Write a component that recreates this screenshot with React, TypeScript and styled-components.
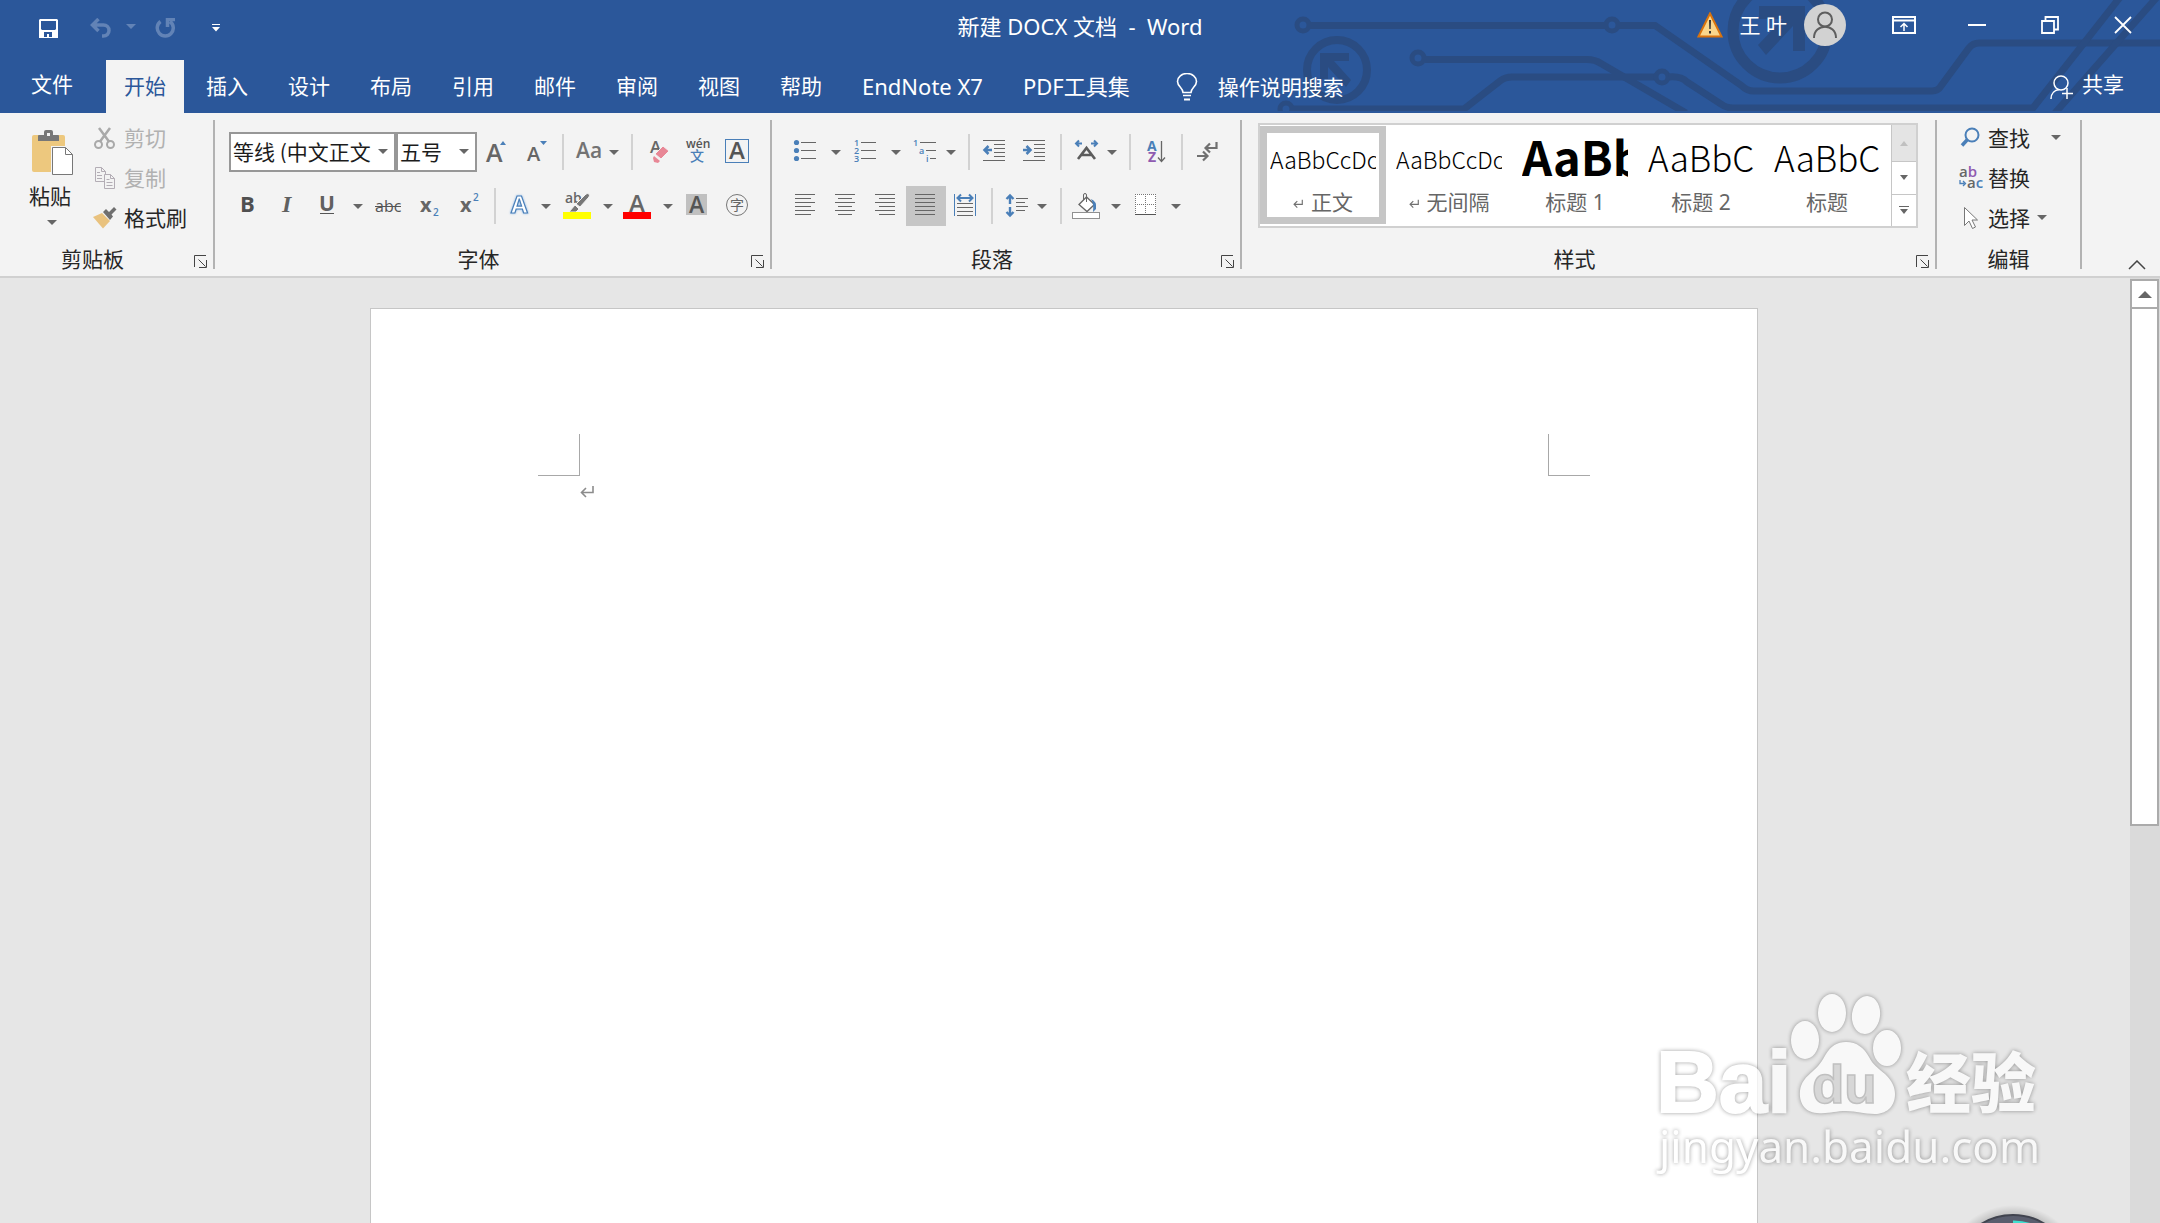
import React from "react";
import styled, { createGlobalStyle } from "styled-components";

const UI = `"Noto Sans", "Noto Sans CJK SC", sans-serif`;
const DENG = `"Noto Sans CJK SC", "Noto Sans", sans-serif`;
const GREY = "#666666";
const BLUE = "#4a7fb8";
const PURPLE = "#8f5bb0";

const Global = createGlobalStyle`
  *, *::before, *::after { box-sizing: border-box; }
  html, body { margin: 0; height: 100%; overflow: hidden; }
  #root { height: 100%; }
  body { font: 21px/24px ${UI}; color: #262626; background: #e6e6e6; }
  button, input, select { font: inherit; color: inherit; border: 0; background: none; padding: 0; margin: 0; outline: none; }
  svg { display: block; flex: none; }
  svg text { font-family: "Open Sans", "Noto Sans CJK SC", sans-serif; }
`;

const Window = styled.div`
  display: flex;
  flex-direction: column;
  height: 100vh;
  position: relative;
  overflow: hidden;
`;

/* ---------- header ---------- */
const Header = styled.header`
  position: relative;
  background: #2b579a;
  color: #ffffff;
  flex: none;
`;
const Circuit = styled.svg`
  position: absolute;
  top: 0;
  right: 0;
`;
const TitleRow = styled.div`
  position: relative;
  display: grid;
  grid-template-columns: 1fr auto 1fr;
  height: 54px;
`;
const QuickAccess = styled.div`
  display: flex;
  align-items: center;
  gap: 8px;
  padding: 2px 0 0 24px;
`;
const QuickButton = styled.button<{ $w: number }>`
  width: ${(p) => p.$w}px;
  height: 40px;
  display: flex;
  align-items: center;
  justify-content: center;
`;
const UndoButton = styled(QuickButton)`
  justify-content: flex-end;
`;
const Title = styled.h1`
  margin: 0;
  font-size: 22px;
  font-weight: 400;
  line-height: 52px;
  white-space: pre;
`;
const TitleRight = styled.div`
  display: flex;
  align-items: center;
  justify-content: flex-end;
  height: 50px;
  padding-right: 1px;
`;
const Account = styled.button`
  display: flex;
  align-items: center;
  gap: 17px;
  margin-right: 21px;
`;
const WinButton = styled.button`
  width: 73px;
  height: 50px;
  display: flex;
  align-items: center;
  justify-content: center;
`;
const TabRow = styled.nav`
  position: relative;
  display: flex;
  align-items: flex-end;
  height: 59px;
`;
const Tab = styled.button<{ $active?: boolean; $latin?: boolean }>`
  height: 53px;
  white-space: nowrap;
  font-size: ${(p) => (p.$latin ? 22 : 21)}px;
  padding: 0 ${(p) => (p.$active ? 18 : 20)}px 2px;
  margin: 0 ${(p) => (p.$active ? 2 : 0)}px;
  background: ${(p) => (p.$active ? "#f3f3f3" : "transparent")};
  color: ${(p) => (p.$active ? "#2b579a" : "#ffffff")};
`;
const FileTab = styled(Tab)`
  width: 104px;
  padding-bottom: 6px;
`;
const TellMe = styled.label`
  display: flex;
  align-items: center;
  gap: 20px;
  height: 53px;
  margin-left: 26px;
`;
const TellInput = styled.input`
  width: 180px;
  height: 30px;
  &::placeholder { color: #ffffff; opacity: 1; }
`;
const Share = styled.button`
  display: flex;
  align-items: center;
  gap: 8px;
  height: 53px;
  margin-left: auto;
  padding: 0 36px 6px 0;
  svg { margin-top: 6px; }
`;

/* ---------- ribbon ---------- */
const Ribbon = styled.section`
  display: flex;
  flex: none;
  height: 165px;
  padding: 6px 0;
  background: #f3f3f3;
  border-bottom: 2px solid #d0d0d0;
`;
const Group = styled.div<{ $w?: number }>`
  display: flex;
  flex-direction: column;
  flex: ${(p) => (p.$w ? `none` : `1`)};
  width: ${(p) => (p.$w ? `${p.$w}px` : `auto`)};
  min-width: 0;
  border-right: 2px solid #b2b2b2;
  margin: 1px 0;
`;
const GroupBody = styled.div`
  flex: 1;
  display: flex;
  min-width: 0;
`;
const GroupFoot = styled.div`
  display: flex;
  align-items: center;
  height: 24px;
  padding-top: 4px;
`;
const GroupLabel = styled.div`
  flex: 1;
  text-align: center;
`;
const Launcher = styled.button`
  width: 28px;
  height: 20px;
  display: flex;
  align-items: center;
  justify-content: center;
  padding: 4px 0 0 2px;
`;
const ToolRows = styled.div`
  display: flex;
  flex-direction: column;
  gap: 14px;
  padding: 12px 0 0 14px;
`;
const ToolRow = styled.div`
  display: flex;
  height: 40px;
`;
const Tool = styled.button<{ $on?: boolean }>`
  height: 40px;
  background: ${(p) => (p.$on ? "#c6c6c6" : "transparent")};
`;
const Divider = styled.span`
  width: 2px;
  height: 36px;
  margin: 2px 5px;
  background: #d2d2d2;
`;
const Combo = styled.label<{ $w: number }>`
  position: relative;
  display: flex;
  align-items: center;
  width: ${(p) => p.$w}px;
  height: 40px;
  border: 2px solid #979797;
  background: #ffffff;
  svg { position: absolute; right: 6px; top: 15px; }
`;
const Select = styled.select`
  appearance: none;
  width: 100%;
  height: 36px;
  padding: 0 0 2px 2px;
  font-family: ${DENG};
  color: #1c1c1c;
`;
const PasteButton = styled.button`
  display: flex;
  flex-direction: column;
  align-items: center;
  width: 84px;
  padding: 10px 0 0 22px;
`;
const PasteLabel = styled.span`
  display: flex;
  flex-direction: column;
  align-items: center;
  gap: 12px;
  margin: 8px 6px 0 0;
  svg { margin-left: 4px; }
`;
const Stack = styled.div<{ $pad?: number }>`
  display: flex;
  flex-direction: column;
  padding-left: ${(p) => p.$pad ?? 0}px;
`;
const CommandButton = styled.button<{ $off?: boolean; $gap?: number }>`
  display: flex;
  align-items: center;
  height: 40px;
  padding-bottom: 4px;
  white-space: nowrap;
  color: ${(p) => (p.$off ? "#b1b1b1" : "#262626")};
  svg:first-child { margin-right: 5px; }
  svg:last-child { margin-left: ${(p) => p.$gap ?? 0}px; }
`;
const Gallery = styled.div`
  display: flex;
  flex: 1;
  height: 105px;
  margin: 3px 17px 0 16px;
  border: 2px solid #d0d0d0;
  background: #ffffff;
  min-width: 0;
`;
const GalleryItems = styled.div`
  display: flex;
  flex: 1;
  min-width: 0;
  overflow: hidden;
  padding-top: 1px;
`;
const StyleCard = styled.button<{ $on?: boolean }>`
  display: flex;
  flex-direction: column;
  flex: none;
  width: 126px;
  height: 98px;
  padding: 0 3px;
  border: 7px solid ${(p) => (p.$on ? "#c6c6c6" : "#ffffff")};
  color: #666666;
`;
const Preview = styled.span<{ $size: number; $line: number; $weight: number }>`
  display: block;
  width: 100%;
  height: 55px;
  overflow: hidden;
  text-align: left;
  white-space: nowrap;
  font: ${(p) => p.$weight} ${(p) => p.$size}px/${(p) => p.$line}px ${DENG};
  color: #000000;
`;
const Caption = styled.span`
  display: flex;
  align-items: center;
  justify-content: center;
  gap: 8px;
  width: 100%;
  height: 28px;
  white-space: nowrap;
  svg { margin-top: 4px; }
`;
const GalleryScroll = styled.div`
  display: flex;
  flex-direction: column;
  width: 25px;
  border-left: 1px solid #c6c6c6;
`;
const ScrollStep = styled.button<{ $off?: boolean }>`
  flex: ${(p) => (p.$off ? "0 0 36px" : "1")};
  display: flex;
  align-items: center;
  justify-content: center;
  background: ${(p) => (p.$off ? "#e4e4e4" : "#ffffff")};
  & + & { border-top: 1px solid #c6c6c6; }
`;
const RibbonEnd = styled.div`
  display: flex;
  align-items: flex-end;
  justify-content: flex-end;
  width: 78px;
  padding-right: 14px;
`;

/* ---------- document ---------- */
const Workspace = styled.main`
  flex: 1;
  display: flex;
  min-height: 0;
  background: #e6e6e6;
`;
const Canvas = styled.div`
  flex: 1;
  display: flex;
  justify-content: center;
  padding: 30px 2px 0 0;
  overflow: hidden;
`;
const Page = styled.article`
  width: 1388px;
  height: 1964px;
  flex: none;
  padding: 125px 167px;
  background: #ffffff;
  border: 1px solid #c6c6c6;
`;
const MarginMarks = styled.div`
  display: flex;
  justify-content: space-between;
`;
const Corner = styled.span<{ $side: "left" | "right" }>`
  width: 42px;
  height: 42px;
  border-bottom: 1px solid #a8a8a8;
  border-${(p) => (p.$side === "left" ? "right" : "left")}: 1px solid #a8a8a8;
`;
const Paragraph = styled.p`
  margin: 9px 0 0 42px;
`;
const Scrollbar = styled.div`
  display: flex;
  flex-direction: column;
  width: 30px;
  padding: 1px 1px 0 0;
  background: #dadada;
`;
const ScrollUp = styled.button`
  display: flex;
  align-items: center;
  justify-content: center;
  height: 30px;
  flex: none;
  border: 2px solid #ababab;
  background: #ffffff;
`;
const Thumb = styled.div`
  flex: none;
  height: 55%;
  margin-top: -2px;
  border: 2px solid #ababab;
  background: #ffffff;
`;
const Watermark = styled.svg`
  position: absolute;
  right: 104px;
  bottom: 33px;
  opacity: 0.75;
  filter: drop-shadow(0 0 2px rgba(0, 0, 0, 0.5));
`;
const FloatBall = styled.svg`
  position: absolute;
  right: 72px;
  bottom: 0;
`;

/* ---------- drawings ---------- */
const Drop = ({ fill = GREY }: { fill?: string }) => (
  <svg width="10" height="6" viewBox="0 0 10 6"><path d="M0 0h10L5 5z" fill={fill} /></svg>
);
const Glyph = ({ w = 40, drop, children }: { w?: number; drop?: number; children: React.ReactNode }) => (
  <svg width={w} height="40" viewBox={`0 0 ${w} 40`} fill="none">
    {children}
    {drop !== undefined && <path d={`M${drop} 18h10l-5 5z`} fill={GREY} />}
  </svg>
);
const Lines = ({ rows }: { rows: number[][] }) => (
  <g fill={GREY}>{rows.map(([y, a, b]) => <rect key={y} x={a} y={y} width={b - a} height="1" />)}</g>
);
const ReturnMark = ({ size = 14, color = "#8c8c8c" }) => (
  <svg width={size} height={size} viewBox="0 0 14 14" fill="none" stroke={color} strokeWidth="1.6">
    <path d="M13 1v6.500H1.500M6 3L1.500 7.500 6 12" />
  </svg>
);

const T = ({ label, children, on }: { label: string; children: React.ReactNode; on?: boolean }) => (
  <Tool type="button" aria-label={label} aria-pressed={on} $on={on}>{children}</Tool>
);

const CircuitArt = () => (
  <Circuit width="900" height="111" viewBox="1260 0 900 111" fill="none" stroke="#2a4c82" strokeWidth="7" aria-hidden="true">
    <circle cx="1303" cy="25" r="6" strokeWidth="5" />
    <circle cx="1612" cy="25" r="6" strokeWidth="5" />
    <path d="M1310 25.500h295M1619 25.500h36L1742 86q5 5 12 5h178q6 0 9-5l28-38q4-5 10-5h182" />
    <circle cx="1418" cy="58" r="6" strokeWidth="5" />
    <path d="M1425 59.500h162q8 0 14 4L1686 113" />
    <circle cx="1286" cy="109" r="6" strokeWidth="5" />
    <path d="M1293 109h171l36-28q5-4 12-4h143" />
    <circle cx="1662" cy="77" r="6" strokeWidth="5" />
    <path d="M1669 77q12-1 18 5l34 22q5 4 12 4h300L2121-4M2055 113L2158-4" />
    <circle cx="1337" cy="70" r="30" strokeWidth="8" />
    <circle cx="1780" cy="31" r="47" strokeWidth="11" />
    <g fill="#2a4c82" stroke="none">
      <path d="M1320 53h29v8h-15l17 19-5 7-18-20v12h-8z" />
      <path d="M1759 6h46v45h-12V26l-27 29-8-10 25-26h-24z" />
    </g>
  </Circuit>
);

const tabs = [
  { name: "插入" }, { name: "设计" }, { name: "布局" }, { name: "引用" }, { name: "邮件" }, { name: "审阅" },
  { name: "视图" }, { name: "帮助" }, { name: "EndNote X7", latin: true }, { name: "PDF工具集", latin: true },
];
const cards = [
  { name: "正文", text: "AaBbCcDc", size: 23, line: 52, weight: 300, mark: true },
  { name: "无间隔", text: "AaBbCcDc", size: 23, line: 52, weight: 300, mark: true },
  { name: "标题 1", text: "AaBb", size: 47, line: 46, weight: 700 },
  { name: "标题 2", text: "AaBbC", size: 35, line: 48, weight: 300 },
  { name: "标题", text: "AaBbC", size: 35, line: 48, weight: 300 },
];

const Foot = ({ label, launch = true }: { label: string; launch?: boolean }) => (
  <GroupFoot>
    <GroupLabel>{label}</GroupLabel>
    {launch && (
      <Launcher type="button" aria-label={`${label}设置`}>
        <svg width="13" height="13" viewBox="0 0 13 13" fill="none" stroke="#444">
          <path d="M.5 12V.5H12M4.500 4.500l7 7M12.500 5v7.500H5" />
        </svg>
      </Launcher>
    )}
  </GroupFoot>
);

function TopBar() {
  return (
    <Header>
      <CircuitArt />
      <TitleRow>
        <QuickAccess>
          <QuickButton $w={48} type="button" aria-label="保存">
            <svg width="19" height="19" viewBox="0 0 19 19"><path fill="#fff" fillRule="evenodd" d="M0 1l1-1h17l1 1v18H0zM2 2v8l1 1h13l1-1V2zM5 13v5h3v-3h2v3h3v-5z" /></svg>
          </QuickButton>
          <UndoButton $w={56} type="button" aria-label="撤消">
            <svg width="46" height="20" viewBox="0 0 46 20" fill="none" stroke="#6283b6" strokeWidth="3.500">
              <path d="M3 7h10.500a5.500 5.500 0 0 1 0 11H12M8.500 1L2.500 7l6 6" />
              <path d="M36 6h10l-5 5z" fill="#6283b6" stroke="none" />
            </svg>
          </UndoButton>
          <QuickButton $w={42} type="button" aria-label="重复">
            <svg width="20" height="20" viewBox="0 0 20 20" fill="none" stroke="#6283b6" strokeWidth="3.500">
              <path d="M5.500 3.500a8 8 0 1 0 9.500 0M12.500 9V1.500H20" />
            </svg>
          </QuickButton>
          <QuickButton $w={44} type="button" aria-label="自定义快速访问工具栏">
            <svg width="8" height="8" viewBox="0 0 8 8" fill="#fff"><path d="M0 0h8v1H0zM0 3h8L4 7.500z" /></svg>
          </QuickButton>
        </QuickAccess>
        <Title>{"新建 DOCX 文档  -  Word"}</Title>
        <TitleRight>
          <Account type="button">
            <svg width="26" height="26" viewBox="0 0 26 26">
              <path d="M13 1.500L24.500 24.500H1.500z" fill="#f9d68c" stroke="#d9730d" strokeWidth="2" />
              <path d="M12 8h2l-.3 9h-1.400zM12 19h2v2.500h-2z" fill="#333" />
            </svg>
            <span>王 叶</span>
            <svg width="42" height="42" viewBox="0 0 42 42" fill="none" stroke="#5e5e5e" strokeWidth="2">
              <circle cx="21" cy="21" r="21" fill="#d2d2d2" stroke="none" />
              <circle cx="21" cy="15.500" r="7" />
              <path d="M10 34c0-15 22-15 22 0" />
            </svg>
          </Account>
          <WinButton type="button" aria-label="功能区显示选项">
            <svg width="24" height="18" viewBox="0 0 24 18" fill="none" stroke="#fff" strokeWidth="2">
              <path d="M1 1h22v16H1zM1 4.500h22" /><path d="M12 15V8M8.500 11L12 7.500l3.500 3.500" strokeWidth="1.500" />
            </svg>
          </WinButton>
          <WinButton type="button" aria-label="最小化">
            <svg width="18" height="2" viewBox="0 0 18 2"><path d="M0 0h18v2H0z" fill="#fff" /></svg>
          </WinButton>
          <WinButton type="button" aria-label="还原">
            <svg width="18" height="18" viewBox="0 0 18 18" fill="none" stroke="#fff" strokeWidth="1.800"><path d="M1 5h12v12H1zM4.500 5V1H17v12.500h-4" /></svg>
          </WinButton>
          <WinButton type="button" aria-label="关闭">
            <svg width="18" height="18" viewBox="0 0 18 18" fill="none" stroke="#fff" strokeWidth="1.800"><path d="M1 1l16 16M17 1L1 17" /></svg>
          </WinButton>
        </TitleRight>
      </TitleRow>
      <TabRow>
        <FileTab type="button">文件</FileTab>
        <Tab type="button" $active>开始</Tab>
        {tabs.map((t) => <Tab key={t.name} type="button" $latin={t.latin}>{t.name}</Tab>)}
        <TellMe>
          <svg width="22" height="28" viewBox="0 0 22 28" fill="none" stroke="#fff" strokeWidth="1.600">
            <path d="M7 19.500c0-4.500-5.500-6-5.500-11a9.500 8 0 0 1 19 0c0 5-5.500 6.500-5.500 11zM7 22.500h8" /><path d="M8 26.500h6" strokeWidth="2" />
          </svg>
          <TellInput placeholder="操作说明搜索" aria-label="操作说明搜索" />
        </TellMe>
        <Share type="button">
          <svg width="24" height="26" viewBox="0 0 24 26" fill="none" stroke="#fff" strokeWidth="1.500">
            <circle cx="11" cy="9" r="7" /><path d="M1 25c0-6 4-9 8-9.500M17 14v11M12 19.500h11" />
          </svg>
          共享
        </Share>
      </TabRow>
    </Header>
  );
}

function ClipboardGroup() {
  return (
    <Group $w={215}>
      <GroupBody>
        <PasteButton type="button">
          <svg width="42" height="46" viewBox="0 0 42 46">
            <rect x="0" y="5" width="33" height="37" rx="2" fill="#edc87e" />
            <path d="M6 11V6q0-1 1-1h5V2q0-2 2-2h5q2 0 2 2v3h5q1 0 1 1v5z" fill="#777" /><rect x="15" y="3" width="3" height="3" fill="#f3f3f3" />
            <path d="M19 16h16l7 7v22H19z" fill="#f3f3f3" />
            <path d="M20.500 17.500h13l7 7v20h-20z" fill="#fff" stroke="#777" /><path d="M33.500 17.500v7h7" fill="none" stroke="#777" />
          </svg>
          <PasteLabel>粘贴<Drop /></PasteLabel>
        </PasteButton>
        <Stack $pad={9}>
          <CommandButton type="button" $off>
            <svg width="26" height="24" viewBox="0 0 26 24" fill="none" stroke="#a9a9a9" strokeWidth="2">
              <circle cx="5.500" cy="18.500" r="3.500" /><circle cx="17.500" cy="18.500" r="3.500" />
              <path d="M7 15.500L17 2M16 15.500L6 2" strokeWidth="2.500" />
            </svg>
            剪切
          </CommandButton>
          <CommandButton type="button" $off>
            <svg width="26" height="24" viewBox="0 0 26 24" fill="#f3f3f3" stroke="#b3adb5">
              <path d="M2.500 1.500h6l4 4v10h-10zM8.500 1.500v4h4M4 6.500h3M4 9.500h5M4 12.500h5" />
              <path d="M11.500 8.500h6l4 4v10h-10zM17.500 8.500v4h4M13.500 13.500h3M13.500 16.500h6M13.500 19.500h6" />
            </svg>
            复制
          </CommandButton>
          <CommandButton type="button">
            <svg width="26" height="24" viewBox="0 0 26 24">
              <path d="M0 11l9-4 8 8-7 7.500z" fill="#e9c27e" />
              <path d="M10 6l3-3 3 3 5-5 2.500 2.500-5 5 1.500 2-3 3.500z" fill="#6f6f6f" />
            </svg>
            格式刷
          </CommandButton>
        </Stack>
      </GroupBody>
      <Foot label="剪贴板" />
    </Group>
  );
}

function FontGroup() {
  return (
    <Group $w={557}>
      <GroupBody>
        <ToolRows>
          <ToolRow>
            <Combo $w={167}><Select aria-label="字体"><option>等线 (中文正文</option></Select><Drop /></Combo>
            <Combo $w={81}><Select aria-label="字号"><option>五号</option></Select><Drop /></Combo>
            <T label="增大字号"><Glyph><text x="9" y="30" fontSize="25" fontWeight="600" fill={GREY}>A</text><path d="M23 13l3-4 3 4z" fill={BLUE} /></Glyph></T>
            <T label="减小字号"><Glyph><text x="10" y="29" fontSize="20" fontWeight="600" fill={GREY}>A</text><path d="M23 9h7l-3.500 4z" fill={BLUE} /></Glyph></T>
            <Divider />
            <T label="更改大小写"><Glyph w={57} drop={40}><text x="7" y="26" fontSize="21" fontWeight="600" fill="#737373">Aa</text></Glyph></T>
            <Divider />
            <T label="清除所有格式">
              <Glyph><text x="12" y="21" fontSize="17" fontWeight="600" fill={GREY}>A</text>
                <path d="M17 22L25 14l6 5-8 8z" fill="#e88796" stroke="#f3f3f3" strokeWidth="1" /><path d="M16 24l6 5-2 2-4-1-1-4z" fill="#e88796" />
              </Glyph>
            </T>
            <T label="拼音指南"><Glyph><text x="8" y="16" fontSize="12" fontWeight="600" fill="#555">wén</text><text x="12" y="29" fontSize="14" fontWeight="500" fill={BLUE}>文</text></Glyph></T>
            <T label="字符边框"><Glyph><rect x="7.500" y="7.500" width="23" height="23" stroke={BLUE} /><text x="11" y="27" fontSize="24" fontWeight="600" fill="#555">A</text></Glyph></T>
          </ToolRow>
          <ToolRow>
            <T label="加粗"><Glyph><text x="11" y="26" fontSize="22" fontWeight="700" fill="#505050">B</text></Glyph></T>
            <T label="倾斜"><Glyph><text x="13" y="26" fontSize="24" fontWeight="700" fontStyle="italic" fill="#606060" style={{ fontFamily: "Liberation Serif, serif" }}>I</text></Glyph></T>
            <T label="下划线"><Glyph w={60} drop={44}><text x="10" y="25" fontSize="21" fontWeight="700" fill="#606060">U</text><path d="M11 27h14v1H11z" fill="#555" /></Glyph></T>
            <T label="删除线"><Glyph><text x="6" y="26" fontSize="16" fill="#555">abc</text><path d="M6 20h26v1H6z" fill="#555" /></Glyph></T>
            <T label="下标"><Glyph><text x="11" y="26" fontSize="20" fontWeight="700" fill={GREY}>x</text><text x="24" y="30" fontSize="10" fontWeight="600" fill={BLUE}>2</text></Glyph></T>
            <T label="上标"><Glyph><text x="11" y="26" fontSize="20" fontWeight="700" fill={GREY}>x</text><text x="24" y="15" fontSize="10" fontWeight="600" fill={BLUE}>2</text></Glyph></T>
            <Divider />
            <T label="文本效果">
              <Glyph w={57} drop={40}><text x="10" y="27" fontSize="24" fontWeight="700" fill="#fff" stroke={BLUE} strokeWidth="1.200" style={{ filter: "drop-shadow(0 0 1px #8db9e8)" }}>A</text></Glyph>
            </T>
            <T label="突出显示">
              <Glyph w={60} drop={45}><text x="7" y="17" fontSize="14" fontWeight="600" fill={GREY}>ab</text>
                <path d="M18 18L28 8q2-1 3 0t0 3L22 21zM17 19l4 4-3 3h-7z" fill="#777" stroke="#f3f3f3" strokeWidth="1" /><path d="M5 26h28v7H5z" fill="#ff0" />
              </Glyph>
            </T>
            <T label="字体颜色"><Glyph w={60} drop={45}><text x="11" y="26" fontSize="24" fontWeight="600" fill={GREY}>A</text><path d="M5 26h28v7H5z" fill="#f00" /></Glyph></T>
            <T label="字符底纹"><Glyph><path d="M8 8h21v21H8z" fill="#c0c0c0" /><text x="11" y="27" fontSize="23" fontWeight="600" fill="#555">A</text></Glyph></T>
            <T label="带圈字符"><Glyph><circle cx="19" cy="19" r="10.500" stroke="#777" /><text x="12" y="24" fontSize="14" fill={GREY}>字</text></Glyph></T>
          </ToolRow>
        </ToolRows>
      </GroupBody>
      <Foot label="字体" />
    </Group>
  );
}

const lineYs = [8, 12, 16, 20, 24, 28];

function ParagraphGroup() {
  return (
    <Group $w={470}>
      <GroupBody>
        <ToolRows>
          <ToolRow>
            <T label="项目符号"><Glyph w={60} drop={45}><g fill={BLUE}><circle cx="10.500" cy="10.500" r="2.600" /><circle cx="10.500" cy="18.500" r="2.600" /><circle cx="10.500" cy="26.500" r="2.600" /></g><Lines rows={[[10, 15, 30], [18, 15, 30], [26, 15, 30]]} /></Glyph></T>
            <T label="编号"><Glyph w={60} drop={45}><g fill={BLUE} fontSize="9" fontWeight="600"><text x="8" y="14">1</text><text x="8" y="22">2</text><text x="8" y="30">3</text></g><Lines rows={[[10, 15, 30], [18, 15, 30], [26, 15, 30]]} /></Glyph></T>
            <T label="多级列表"><Glyph w={57} drop={40}><g fill={BLUE} fontSize="9" fontWeight="600"><text x="7" y="14">1</text><text x="13" y="22">a</text><text x="20" y="30">i</text></g><Lines rows={[[10, 14, 30], [18, 20, 30], [26, 24, 30]]} /></Glyph></T>
            <Divider />
            <T label="减少缩进量"><Glyph><Lines rows={[[8, 8, 30], [12, 19, 30], [16, 19, 30], [20, 19, 30], [24, 19, 30], [28, 8, 30]]} /><path d="M17 18H9.500M13.500 14L9.500 18l4 4" stroke={BLUE} strokeWidth="2.500" /></Glyph></T>
            <T label="增加缩进量"><Glyph><Lines rows={[[8, 8, 30], [12, 19, 30], [16, 19, 30], [20, 19, 30], [24, 19, 30], [28, 8, 30]]} /><path d="M8 18h7.500M11.500 14l4 4-4 4" stroke={BLUE} strokeWidth="2.500" /></Glyph></T>
            <Divider />
            <T label="中文版式">
              <Glyph w={57} drop={40}><path d="M15 11.500H9M12 8.500l-3 3 3 3M24 11.500h6M27 8.500l3 3-3 3" stroke={BLUE} strokeWidth="2" />
                <path d="M11 27l8.500-11L28 27M14 23h11" stroke="#5c5c5c" strokeWidth="2.600" />
              </Glyph>
            </T>
            <Divider />
            <T label="排序"><Glyph><g fontSize="14" fontWeight="700"><text x="11" y="19" fill={BLUE}>A</text><text x="12" y="30" fill={PURPLE}>Z</text></g><path d="M25.500 9v20M22 25.500l3.500 4 3.500-4" stroke={GREY} strokeWidth="1.300" /></Glyph></T>
            <Divider />
            <T label="显示编辑标记"><Glyph><path d="M28.500 10v6H18M22 11.500L17.500 16l4.500 4.500M9 24h10M15 19.500l4.500 4.500-4.500 4.500" stroke="#707070" strokeWidth="2.200" /></Glyph></T>
          </ToolRow>
          <ToolRow>
            <T label="左对齐"><Glyph><Lines rows={lineYs.map((y, i) => [y, 9, i % 2 ? 25 : 29])} /></Glyph></T>
            <T label="居中"><Glyph><Lines rows={lineYs.map((y, i) => (i % 2 ? [y, 12, 26] : [y, 9, 29]))} /></Glyph></T>
            <T label="右对齐"><Glyph><Lines rows={lineYs.map((y, i) => [y, i % 2 ? 13 : 9, 29])} /></Glyph></T>
            <T label="两端对齐" on><Glyph><Lines rows={lineYs.map((y) => [y, 9, 29])} /></Glyph></T>
            <T label="分散对齐"><Glyph><path d="M8.500 8v22M29.500 8v22" stroke={BLUE} /><path d="M12 12h14M15 8.500L11.500 12l3.500 3.500M23 8.500l3.500 3.500-3.500 3.500" stroke={BLUE} strokeWidth="2" /><Lines rows={[[17, 11, 27], [21, 11, 27], [25, 11, 27], [29, 11, 27]]} /></Glyph></T>
            <Divider />
            <T label="行距"><Glyph w={57} drop={39}><path d="M12 10v8M8.500 13L12 9.500l3.500 3.500M12 21v8M8.500 26l3.500 3.500 3.500-3.500" stroke={BLUE} strokeWidth="2.400" /><Lines rows={[[12, 18, 30], [16, 18, 27], [20, 18, 30], [24, 18, 27]]} /></Glyph></T>
            <Divider />
            <T label="底纹">
              <Glyph w={60} drop={44}><path d="M12 18.500L19.500 11l8 7.500-7.500 7z" fill="#fff" stroke={GREY} strokeWidth="1.300" /><path d="M16.500 14V9q0-1.500 1.500-1.500T19.500 9v7" stroke={GREY} /><path d="M24 13q6 2 5 10l-3 3q1-8-2-13z" fill={BLUE} /><rect x="5.500" y="26.500" width="27" height="6" fill="#fff" stroke="#909090" /></Glyph>
            </T>
            <T label="边框"><Glyph w={60} drop={44}><path d="M8 8h21v21H8z" fill="#fff" /><path d="M8 8.500h22M8 18.500h22M8.500 8v20M18.500 8v20M28.500 8v20" stroke="#777" strokeDasharray="1 1" /><path d="M8 28.500h21" stroke="#555" /></Glyph></T>
          </ToolRow>
        </ToolRows>
      </GroupBody>
      <Foot label="段落" />
    </Group>
  );
}

function StylesGroup() {
  return (
    <Group>
      <GroupBody>
        <Gallery>
          <GalleryItems>
            {cards.map((c, i) => (
              <StyleCard key={c.name} type="button" $on={i === 0}>
                <Preview $size={c.size} $line={c.line} $weight={c.weight}>{c.text}</Preview>
                <Caption>{c.mark && <ReturnMark size={10} color="#707070" />}{c.name}</Caption>
              </StyleCard>
            ))}
          </GalleryItems>
          <GalleryScroll>
            <ScrollStep type="button" aria-label="上一行" $off><svg width="8" height="5" viewBox="0 0 8 5"><path d="M0 5h8L4 0z" fill="#c0c0c0" /></svg></ScrollStep>
            <ScrollStep type="button" aria-label="下一行"><svg width="8" height="5" viewBox="0 0 8 5"><path d="M0 0h8L4 5z" fill="#666" /></svg></ScrollStep>
            <ScrollStep type="button" aria-label="其他样式"><svg width="10" height="8" viewBox="0 0 10 8"><path d="M0 0h10v1H0zM1 3h8L5 8z" fill="#666" /></svg></ScrollStep>
          </GalleryScroll>
        </Gallery>
      </GroupBody>
      <Foot label="样式" />
    </Group>
  );
}

function EditingGroup() {
  return (
    <Group $w={145}>
      <GroupBody>
        <Stack $pad={20}>
          <CommandButton type="button" $gap={21}>
            <svg width="26" height="24" viewBox="0 0 26 24" fill="none" stroke={BLUE}><circle cx="15" cy="9" r="6.500" strokeWidth="2" /><path d="M10.500 13.500L5 19.500" strokeWidth="3.500" /></svg>
            查找
            <Drop />
          </CommandButton>
          <CommandButton type="button">
            <svg width="26" height="24" viewBox="0 0 26 24" fontSize="15" fontWeight="600">
              <text x="2" y="11" fill={GREY}>a<tspan fill={PURPLE}>b</tspan></text>
              <text x="10" y="22" fill={GREY}>a<tspan fill={BLUE}>c</tspan></text>
              <path d="M3 14v3.500h4.500M6 15l2.500 2.500L6 20" fill="none" stroke={BLUE} strokeWidth="1.300" />
            </svg>
            <span>替换</span>
          </CommandButton>
          <CommandButton type="button" $gap={7}>
            <svg width="26" height="24" viewBox="0 0 26 24"><path d="M7.500 1.500v18l4.500-4.500 3.500 7.500 3-1.500-3.500-7h5.500z" fill="#fff" stroke="#777" /></svg>
            选择
            <Drop />
          </CommandButton>
        </Stack>
      </GroupBody>
      <Foot label="编辑" launch={false} />
    </Group>
  );
}

export default function App() {
  return (
    <Window>
      <Global />
      <TopBar />
      <Ribbon>
        <ClipboardGroup />
        <FontGroup />
        <ParagraphGroup />
        <StylesGroup />
        <EditingGroup />
        <RibbonEnd>
          <button type="button" aria-label="折叠功能区">
            <svg width="18" height="10" viewBox="0 0 18 10" fill="none" stroke="#444" strokeWidth="1.500"><path d="M1 9l8-8 8 8" /></svg>
          </button>
        </RibbonEnd>
      </Ribbon>
      <Workspace>
        <Canvas>
          <Page>
            <MarginMarks><Corner $side="left" /><Corner $side="right" /></MarginMarks>
            <Paragraph><ReturnMark /></Paragraph>
          </Page>
        </Canvas>
        <Scrollbar>
          <ScrollUp type="button" aria-label="向上滚动"><svg width="14" height="7" viewBox="0 0 14 7"><path d="M0 7h14L7 0z" fill="#666" /></svg></ScrollUp>
          <Thumb />
        </Scrollbar>
      </Workspace>
      <Watermark width="400" height="204" viewBox="0 0 400 204" fill="#fff">
        <text x="0" y="126" fontSize="87" fontWeight="700" stroke="#fff" strokeWidth="2" style={{ fontFamily: "Liberation Sans, sans-serif" }}>Bai</text>
        <ellipse cx="149" cy="54" rx="14" ry="19" />
        <ellipse cx="176" cy="27" rx="14" ry="19" />
        <ellipse cx="210" cy="29" rx="14" ry="19" transform="rotate(8 210 29)" />
        <ellipse cx="231" cy="62" rx="14" ry="18" />
        <path d="M190 56c11 0 18 6 23 15 4 8 9 11 16 17 7 7 10 13 10 20 0 14-10 20-20 20-12 0-18-3-29-3s-17 3-29 2c-13-1-18-11-17-22 1-9 6-14 13-20 6-5 9-10 13-17 5-8 11-12 20-12z" />
        <text x="156" y="117" fontSize="53" fontWeight="700" fill="#d2d2d2" stroke="#b4b4b4" strokeWidth="1.500" style={{ fontFamily: "Liberation Sans, sans-serif" }}>du</text>
        <text x="250" y="121" fontSize="65" fontWeight="900" style={{ fontFamily: "Noto Sans CJK SC, sans-serif" }}>经验</text>
        <text x="3" y="177" fontSize="44" style={{ fontFamily: "Noto Sans, sans-serif" }}>jingyan.baidu.com</text>
      </Watermark>
      <FloatBall width="150" height="24" viewBox="0 0 150 24">
        <defs><radialGradient id="halo" cx="75" cy="76" r="70" gradientUnits="userSpaceOnUse"><stop offset="0.860" stopColor="#000" stopOpacity="0.160" /><stop offset="1" stopColor="#000" stopOpacity="0" /></radialGradient></defs>
        <circle cx="75" cy="76" r="70" fill="url(#halo)" />
        <circle cx="75" cy="76" r="60" fill="#5a5e6e" stroke="#41444f" strokeWidth="2" />
        <path d="M75 23a53 53 0 0 1 27 7" fill="none" stroke="#3fe0d0" strokeWidth="3" />
      </FloatBall>
    </Window>
  );
}
